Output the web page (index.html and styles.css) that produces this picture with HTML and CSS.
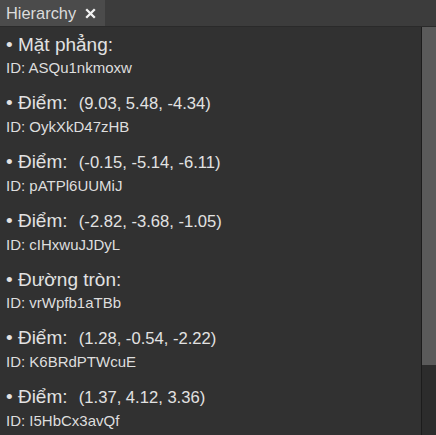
FILE: index.html
```html
<!DOCTYPE html>
<html>
<head>
<meta charset="utf-8">
<link rel="stylesheet" href="styles.css">
</head>
<body>
<div class="panel">
  <div class="tabbar">
    <div class="tab"><span class="tab-title">Hierarchy</span><svg class="tab-close" width="11" height="11" viewBox="0 0 11 11"><path d="M1.2 1.2 L9.8 9.8 M9.8 1.2 L1.2 9.8" stroke="#f2f2f2" stroke-width="2.3" stroke-linecap="butt"/></svg></div>
  </div>
  <div class="body">
    <div class="list">
      <div class="item"><div class="title">• Mặt phẳng:</div><div class="id">ID: ASQu1nkmoxw</div></div>
      <div class="item"><div class="title">• Điểm: <span class="coords">(9.03, 5.48, -4.34)</span></div><div class="id">ID: OykXkD47zHB</div></div>
      <div class="item"><div class="title">• Điểm: <span class="coords">(-0.15, -5.14, -6.11)</span></div><div class="id">ID: pATPl6UUMiJ</div></div>
      <div class="item"><div class="title">• Điểm: <span class="coords">(-2.82, -3.68, -1.05)</span></div><div class="id">ID: cIHxwuJJDyL</div></div>
      <div class="item"><div class="title">• Đường tròn:</div><div class="id">ID: vrWpfb1aTBb</div></div>
      <div class="item"><div class="title">• Điểm: <span class="coords">(1.28, -0.54, -2.22)</span></div><div class="id">ID: K6BRdPTWcuE</div></div>
      <div class="item"><div class="title">• Điểm: <span class="coords">(1.37, 4.12, 3.36)</span></div><div class="id">ID: I5HbCx3avQf</div></div>
    </div>
    <div class="scrollbar"><div class="thumb"></div></div>
  </div>
</div>
</body>
</html>
```
FILE: styles.css
```css
html, body {
  margin: 0;
  padding: 0;
  background: #313131;
}
.panel {
  width: 436px;
  height: 435px;
  display: flex;
  flex-direction: column;
  font-family: "Liberation Sans", Arial, sans-serif;
  color: #e2e2e2;
  overflow: hidden;
}
.tabbar {
  height: 26px;
  background: #3c3c3c;
  border-bottom: 1px solid #2a2a2a;
  display: flex;
  flex: none;
}
.tab {
  width: 105px;
  background: #4b4b4b;
  display: flex;
  align-items: center;
  padding-left: 6px;
  box-sizing: border-box;
}
.tab-title {
  font-size: 16.4px;
  color: #dcdcdc;
}
.tab-close {
  margin-left: 9px;
  margin-top: 1px;
}
.body {
  flex: 1;
  display: flex;
  min-height: 0;
}
.list {
  flex: 1;
  padding: 7px 6px 0 6px;
  display: flex;
  flex-direction: column;
  gap: 15px;
}
.item {
  display: flex;
  flex-direction: column;
  gap: 3px;
}
.title {
  font-size: 19px;
  line-height: 22px;
  white-space: pre;
}
.coords {
  font-size: 16.6px;
  margin-left: 6px;
}
.id {
  font-size: 15px;
  line-height: 18px;
  color: #dedede;
}
.scrollbar {
  width: 14px;
  background: #2c2c2c;
  border-left: 1px solid #1c1c1c;
  flex: none;
}
.thumb {
  height: 338px;
  background: #5a5a5a;
}
```
